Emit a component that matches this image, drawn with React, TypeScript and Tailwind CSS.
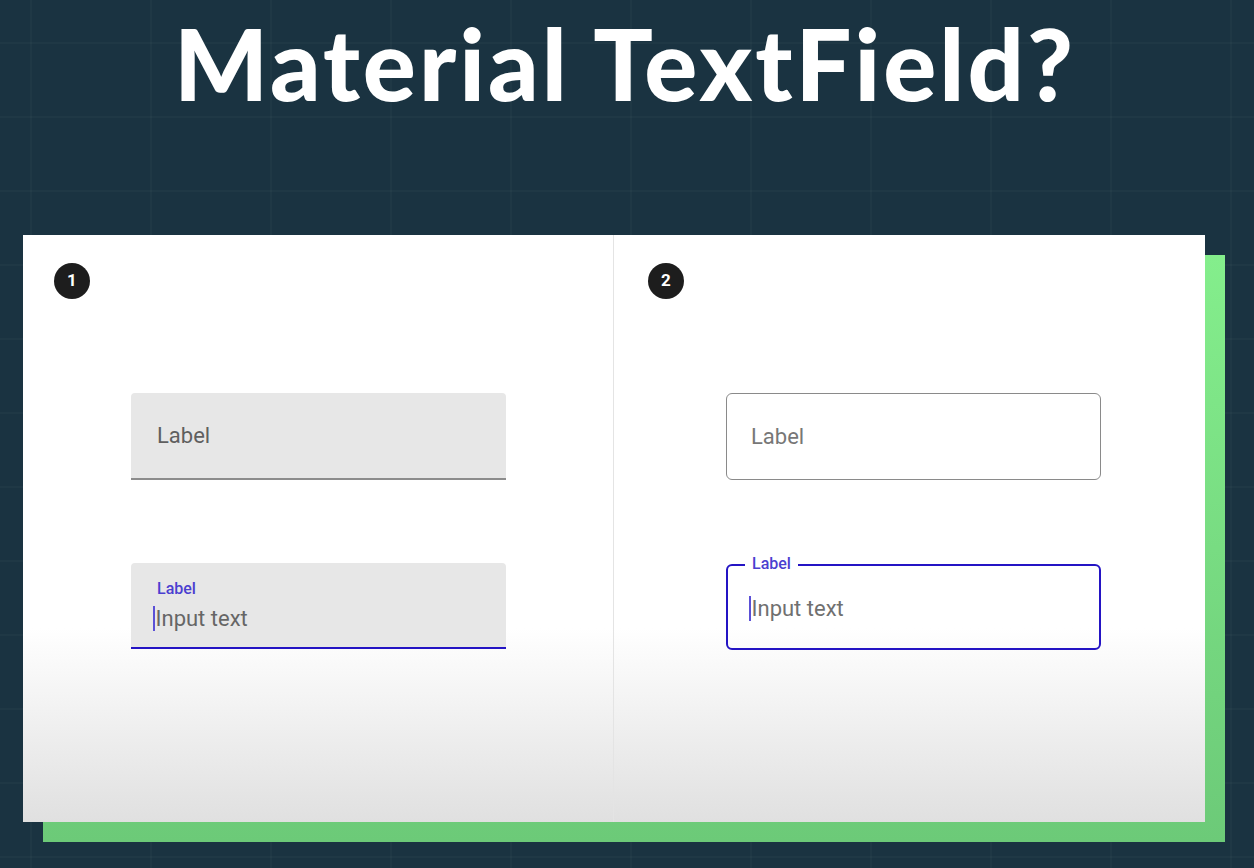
import React from "react";

function Badge({ n }: { n: number }) {
  return (
    <div className="flex h-[36px] w-[36px] items-center justify-center rounded-full bg-[#1d1d1d] text-[17px] font-bold text-white">
      {n}
    </div>
  );
}

function Caret() {
  return <span className="mr-[1px] inline-block h-[25px] w-[1.5px] translate-y-[5px] bg-[#5b50d6]" />;
}

export default function App() {
  return (
    <div
      className="flex h-[868px] w-[1254px] flex-col items-center overflow-hidden bg-[#1a3341] bg-[linear-gradient(to_right,rgba(255,255,255,0.022)_2px,transparent_2px),linear-gradient(to_bottom,rgba(255,255,255,0.022)_2px,transparent_2px)] bg-[size:120px_74px] bg-[position:30px_42px]"
      style={{ fontFamily: "Roboto, 'Liberation Sans', sans-serif" }}
    >
      {/* Titulo */}
      <h1
        className="mt-[8px] ml-[-4px] text-[99px] font-black leading-[110px] tracking-[3px] text-white"
        style={{ fontFamily: "Lato, 'Noto Sans', sans-serif" }}
      >
        Material TextField?
      </h1>

      <div className="relative mt-[117px] self-start ml-[23px]">
        {/* sombra verde */}
        <div className="absolute left-[20px] top-[20px] h-full w-full bg-[linear-gradient(to_bottom,#84ee8c,#6cca78)]" />

        <div className="relative grid h-[587px] w-[1182px] grid-cols-2 bg-[linear-gradient(to_bottom,#ffffff_67%,#e0e0e0)]">
          {/* Filled */}
          <div className="flex flex-col border-r border-[#e4e4e4] pl-[31px] pt-[28px]">
            <Badge n={1} />
            <div className="ml-[77px] mt-[94px] flex flex-col gap-[83px]">
              <div className="flex h-[87px] w-[375px] items-center rounded-t-[4px] border-b-[2px] border-[#8c8c8c] bg-[#e7e7e7] pl-[26px] text-[22px] text-[#5f5f5f]">
                Label
              </div>
              <div className="flex h-[86px] w-[375px] flex-col rounded-t-[4px] border-b-[2px] border-[#2414c4] bg-[#e7e7e7] pl-[22px] pt-[14px]">
                <span className="pl-[4px] text-[16px] font-medium leading-[24px] text-[#4b3fd0]">Label</span>
                <span className="text-[22px] leading-[30px] text-[#666666]">
                  <Caret />
                  Input text
                </span>
              </div>
            </div>
          </div>

          {/* Outlined */}
          <div className="flex flex-col pl-[34px] pt-[28px]">
            <Badge n={2} />
            <div className="ml-[78px] mt-[94px] flex flex-col gap-[84px]">
              <div className="flex h-[87px] w-[375px] items-center rounded-[6px] border-[1.5px] border-[#8a8a8a] pl-[24px] text-[22px] text-[#777777]">
                Label
              </div>
              <div className="relative flex h-[86px] w-[375px] items-center rounded-[6px] border-[2px] border-[#2414c4] pl-[21px] text-[22px] text-[#707070]">
                <span className="absolute left-[17px] top-[-12px] bg-white px-[7px] text-[16px] font-medium leading-[20px] text-[#4b3fd0]">
                  Label
                </span>
                <span className="leading-[30px]">
                  <Caret />
                  Input text
                </span>
              </div>
            </div>
          </div>
        </div>
      </div>
    </div>
  );
}
